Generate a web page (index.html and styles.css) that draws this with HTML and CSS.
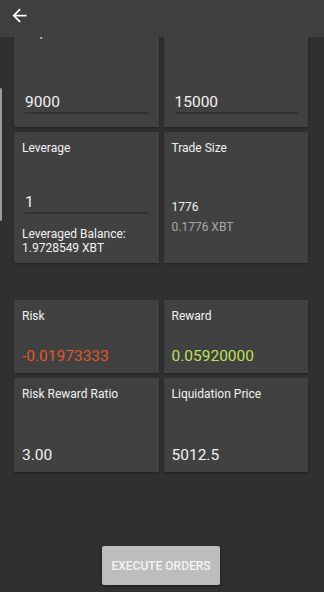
FILE: index.html
```html
<!DOCTYPE html>
<html lang="en">
<head>
    <meta charset="UTF-8">
    <meta name="viewport" content="width=device-width, initial-scale=1.0">
    <title>Position Calculator</title>
    <link rel="stylesheet" href="styles.css">
</head>

<body>
    <header class="appbar">
        <button class="back" aria-label="Back">
            <svg width="21" height="21" viewBox="0 0 24 24">
                <path d="M20 11H7.83l5.59-5.59L12 4l-8 8 8 8 1.41-1.41L7.83 13H20v-2z" fill="#fff"/>
            </svg>
        </button>
    </header>

    <div class="edge"></div>

    <main class="screen">
        <section class="grid">
            <div class="card price">
                <span class="label">Stop Loss</span>
                <input class="field" type="text" value="9000" readonly>
            </div>
            <div class="card price">
                <span class="label">Take Profit</span>
                <input class="field" type="text" value="15000" readonly>
            </div>

            <div class="card leverage">
                <span class="label">Leverage</span>
                <input class="field" type="text" value="1" readonly>
                <p class="balance">Leveraged Balance:<br>1.9728549 XBT</p>
            </div>
            <div class="card size">
                <span class="label">Trade Size</span>
                <span class="size-usd">1776</span>
                <span class="size-xbt">0.1776 XBT</span>
            </div>
        </section>

        <section class="grid results">
            <div class="card stat">
                <span class="label">Risk</span>
                <span class="value risk">-0.01973333</span>
            </div>
            <div class="card stat">
                <span class="label">Reward</span>
                <span class="value reward">0.05920000</span>
            </div>
            <div class="card stat">
                <span class="label">Risk Reward Ratio</span>
                <span class="value">3.00</span>
            </div>
            <div class="card stat">
                <span class="label">Liquidation Price</span>
                <span class="value">5012.5</span>
            </div>
        </section>

        <button class="execute">EXECUTE ORDERS</button>
    </main>
</body>
</html>
```

FILE: styles.css
```css
body {
    margin: 0;
    background-color: #303030;
    font-family: Roboto, "Noto Sans", sans-serif;
    color: #f2f2f2;
}

.appbar {
    position: fixed;
    top: 0;
    left: 0;
    right: 0;
    height: 37px;
    background-color: #3f3f3f;
    z-index: 2;
}

.back {
    margin: 5px 0 0 9px;
    padding: 0;
    width: 21px;
    height: 21px;
    border: none;
    background: none;
}

.back svg {
    display: block;
}

.edge {
    position: fixed;
    left: 0;
    top: 88px;
    width: 2px;
    height: 133px;
    background-color: #9c9c9c;
    border-radius: 0 2px 2px 0;
}

.screen {
    height: 100vh;
    box-sizing: border-box;
    padding: 16px 16px 0 14px;
    display: flex;
    flex-direction: column;
}

.grid {
    display: grid;
    grid-template-columns: repeat(2, minmax(0, 1fr));
    gap: 5px;
}

.card {
    min-width: 0;
    background-color: #414141;
    box-shadow: 0 1px 2px rgba(0, 0, 0, 0.35);
    padding: 8px 8px 0;
    display: flex;
    flex-direction: column;
}

.label {
    font-size: 12px;
    line-height: 16px;
}

.field {
    min-width: 0;
    width: auto;
    margin: 0 2px 0 3px;
    padding: 0;
    height: 22px;
    box-sizing: border-box;
    border: none;
    border-bottom: 2px solid #323232;
    background: transparent;
    color: #f2f2f2;
    font-family: inherit;
    font-size: 15.5px;
    line-height: 20px;
    outline: none;
}

.price .field {
    margin-top: 52px;
    margin-bottom: 13px;
}

.leverage .field {
    margin-top: 35.5px;
}

.balance {
    margin: 13.5px 0 8px;
    font-size: 12px;
    line-height: 14px;
}

.size-usd {
    margin-top: 40.5px;
    font-size: 12px;
    line-height: 20px;
}

.size-xbt {
    font-size: 12px;
    line-height: 20px;
    color: #a9a9a9;
}

.results {
    margin-top: 37px;
    grid-template-rows: 73px 94px;
}

.stat {
    justify-content: space-between;
    padding-bottom: 7px;
}

.value {
    font-size: 15.5px;
    line-height: 20px;
}

.risk {
    color: #e2572c;
}

.reward {
    color: #bde05a;
}

.execute {
    align-self: center;
    margin: auto 0 7px;
    width: 118px;
    height: 39px;
    border: none;
    border-radius: 2px;
    background-color: #bdbdbd;
    color: #f4f4f4;
    font-family: inherit;
    font-size: 12px;
    font-weight: 500;
    box-shadow: 0 1px 3px rgba(0, 0, 0, 0.45);
}
```
